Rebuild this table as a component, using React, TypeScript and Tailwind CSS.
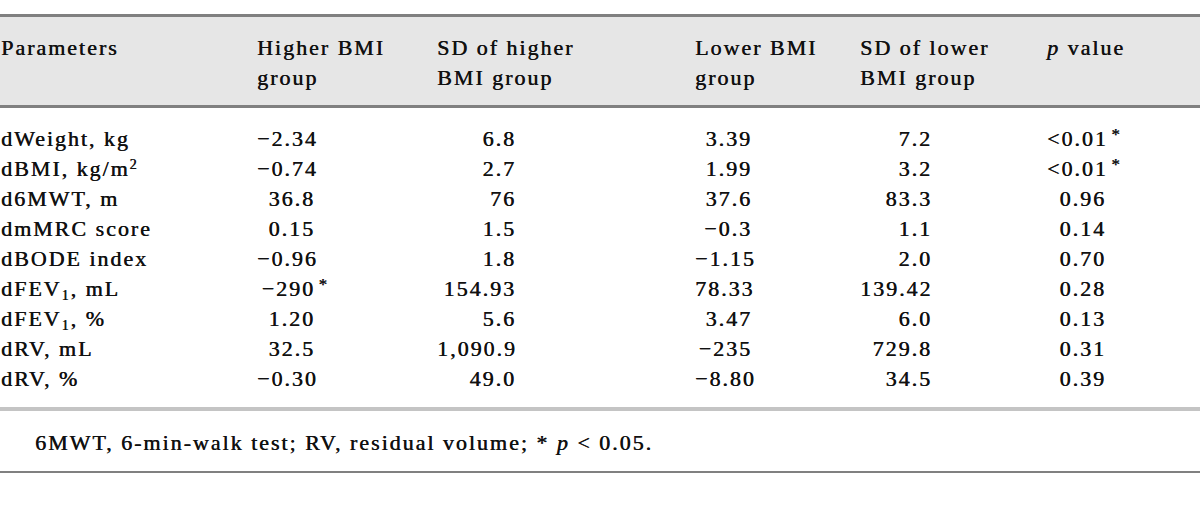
import type { ReactNode } from 'react'

type Row = { label: ReactNode; values: ReactNode[] }

const star = (
  <span className="-mr-[12px] inline-block w-[12px] align-top text-[17px] leading-[22px] tracking-normal">*</span>
)

const rows: Row[] = [
  { label: 'dWeight, kg', values: ['−2.34', '6.8', '3.39', '7.2', <>&lt;0.01{star}</>] },
  {
    label: (
      <>
        dBMI, kg/m<sup className="text-[14px]">2</sup>
      </>
    ),
    values: ['−0.74', '2.7', '1.99', '3.2', <>&lt;0.01{star}</>],
  },
  { label: 'd6MWT, m', values: ['36.8', '76', '37.6', '83.3', '0.96'] },
  { label: 'dmMRC score', values: ['0.15', '1.5', '−0.3', '1.1', '0.14'] },
  { label: 'dBODE index', values: ['−0.96', '1.8', '−1.15', '2.0', '0.70'] },
  {
    label: (
      <>
        dFEV<sub className="text-[14px]">1</sub>, mL
      </>
    ),
    values: [<>−290{star}</>, '154.93', '78.33', '139.42', '0.28'],
  },
  {
    label: (
      <>
        dFEV<sub className="text-[14px]">1</sub>, %
      </>
    ),
    values: ['1.20', '5.6', '3.47', '6.0', '0.13'],
  },
  { label: 'dRV, mL', values: ['32.5', '1,090.9', '−235', '729.8', '0.31'] },
  { label: 'dRV, %', values: ['−0.30', '49.0', '−8.80', '34.5', '0.39'] },
]

// right padding of the numbers in each data column
const pads = ['pr-[122px]', 'pr-[179px]', 'pr-[108px]', 'pr-[115px]', 'pr-[94px]']

const grid = 'grid grid-cols-[257px_180px_258px_165px_187px_1fr]'

export default function App() {
  return (
    <div className="h-[521px] w-[1200px] bg-white pt-[14px] font-['Liberation_Serif',serif] text-[22px] leading-[30px] tracking-[0.09em] text-[#111] [text-shadow:0.45px_0_0_#111]">
      <div className={`${grid} border-y-[3px] border-[#808080] bg-[#e6e6e6] pt-[16px] pb-[12px]`}>
        <div className="pl-[1px]">Parameters</div>
        <div>
          Higher BMI
          <br />
          group
        </div>
        <div>
          SD of higher
          <br />
          BMI group
        </div>
        <div>
          Lower BMI
          <br />
          group
        </div>
        <div>
          SD of lower
          <br />
          BMI group
        </div>
        <div>
          <i>p</i> value
        </div>
      </div>

      <div className="pt-[16px] pb-[13px]">
        {rows.map((r, i) => (
          <div key={i} className={grid}>
            <div className="whitespace-nowrap pl-[1px]">{r.label}</div>
            {r.values.map((v, j) => (
              <div key={j} className={`whitespace-nowrap text-right ${pads[j]}`}>
                {v}
              </div>
            ))}
          </div>
        ))}
      </div>

      <div className="border-t-[4px] border-b-[2px] border-t-[#c4c4c4] border-b-[#808080] pt-[17px] pb-[13px] pl-[35px]">
        6MWT, 6-min-walk test; RV, residual volume; * <i>p</i> &lt; 0.05.
      </div>
    </div>
  )
}
